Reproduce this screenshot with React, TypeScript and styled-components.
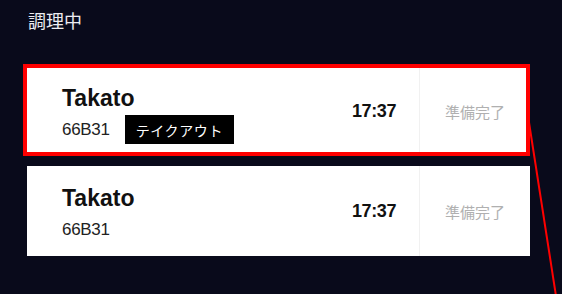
import styled, { createGlobalStyle } from "styled-components";

const GlobalStyle = createGlobalStyle`
  html, body {
    margin: 0;
    padding: 0;
    background: #090a1b;
  }
  body {
    font-family: "Liberation Sans", "Noto Sans CJK JP", sans-serif;
    width: 562px;
    height: 294px;
    overflow: hidden;
  }
`;

const Page = styled.div`
  position: relative;
  width: 562px;
  height: 294px;
  padding: 8px 0 0 27px;
  box-sizing: border-box;
`;

const Title = styled.h2`
  margin: 0 0 33px 1px;
  font-family: "Noto Sans CJK JP", sans-serif;
  font-size: 18px;
  font-weight: 400;
  line-height: 25px;
  color: #ececf0;
`;

const OrderList = styled.div`
  display: flex;
  flex-direction: column;
  gap: 10px;
  width: 503px;
`;

const Card = styled.div`
  position: relative;
  display: flex;
  height: 90px;
  background: #ffffff;
`;

const Highlight = styled.div`
  position: absolute;
  left: -4px;
  top: -2px;
  right: 0;
  bottom: 0;
  border: 4px solid #ff0000;
  pointer-events: none;
`;

const Info = styled.div`
  flex: 1;
  padding: 18px 0 0 35px;
`;

const Name = styled.div`
  font-size: 23px;
  font-weight: 700;
  line-height: 28px;
  color: #111111;
`;

const Meta = styled.div`
  display: flex;
  align-items: center;
  gap: 15px;
  height: 29px;
  margin-top: 3px;
`;

const Code = styled.span`
  font-size: 17px;
  line-height: 20px;
  color: #222222;
  letter-spacing: -0.3px;
`;

const Badge = styled.span`
  display: inline-flex;
  align-items: center;
  height: 29px;
  padding: 0 11px;
  background: #000000;
  color: #ffffff;
  font-family: "Noto Sans CJK JP", sans-serif;
  font-size: 14px;
  letter-spacing: 0.6px;
`;

const Time = styled.div`
  display: flex;
  align-items: center;
  padding-right: 23px;
  font-size: 18px;
  font-weight: 700;
  color: #111111;
  letter-spacing: -0.4px;
`;

const Status = styled.div`
  display: flex;
  align-items: center;
  justify-content: center;
  width: 110px;
  border-left: 1px solid #f1f1f1;
  font-family: "Noto Sans CJK JP", sans-serif;
  font-size: 15px;
  color: #b0b0b0;
`;

const Leader = styled.svg`
  position: absolute;
  left: 0;
  top: 0;
  pointer-events: none;
`;

type Order = {
  id: string;
  name: string;
  code: string;
  time: string;
  takeout: boolean;
  highlighted: boolean;
};

const orders: Order[] = [
  { id: "a", name: "Takato", code: "66B31", time: "17:37", takeout: true, highlighted: true },
  { id: "b", name: "Takato", code: "66B31", time: "17:37", takeout: false, highlighted: false },
];

function App() {
  return (
    <>
      <GlobalStyle />
      <Page>
        <Title>調理中</Title>
        <OrderList>
          {orders.map((order) => (
            <Card key={order.id}>
              <Info>
                <Name>{order.name}</Name>
                <Meta>
                  <Code>{order.code}</Code>
                  {order.takeout && <Badge>テイクアウト</Badge>}
                </Meta>
              </Info>
              <Time>{order.time}</Time>
              <Status>準備完了</Status>
              {order.highlighted && <Highlight />}
            </Card>
          ))}
        </OrderList>
        <Leader width="562" height="294" viewBox="0 0 562 294">
          <line x1="528" y1="116" x2="556" y2="296" stroke="#ff0000" strokeWidth="2" />
        </Leader>
      </Page>
    </>
  );
}

export default App;
